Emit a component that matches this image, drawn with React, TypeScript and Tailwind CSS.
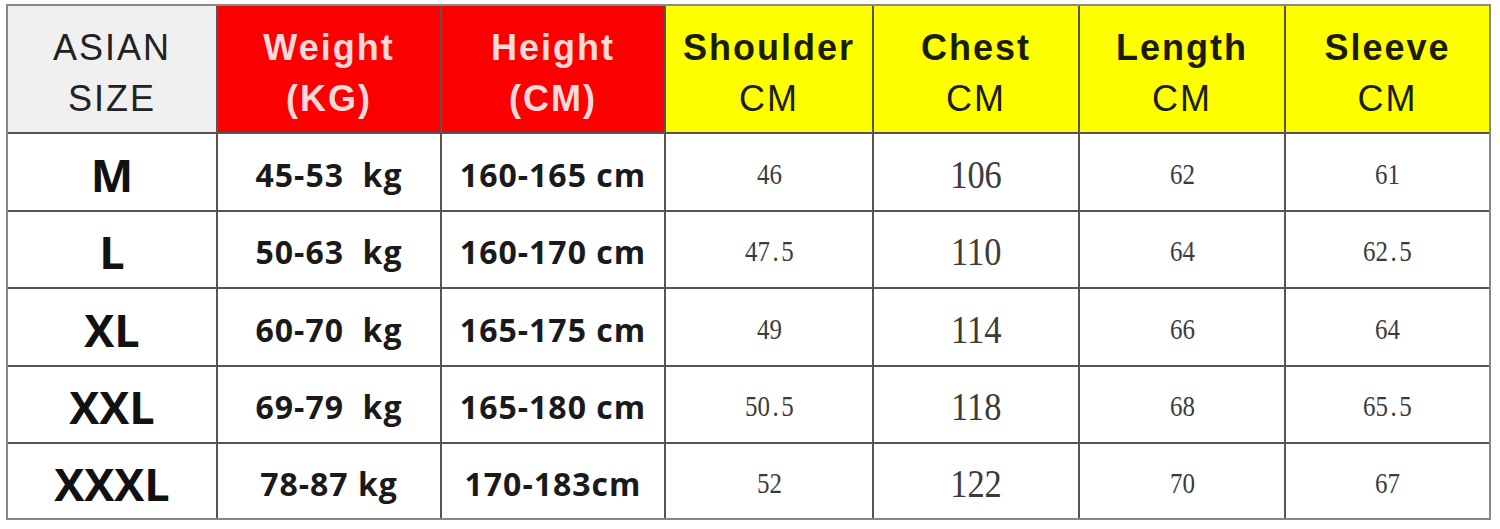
import React from 'react';

interface SizeRow {
  size: string;
  weight: string;
  height: string;
  shoulder: string;
  chest: string;
  length: string;
  sleeve: string;
}

const ROWS: SizeRow[] = [
  { size: 'M', weight: '45-53\u00a0 kg', height: '160-165 cm', shoulder: '46', chest: '106', length: '62', sleeve: '61' },
  { size: 'L', weight: '50-63\u00a0 kg', height: '160-170 cm', shoulder: '47.5', chest: '110', length: '64', sleeve: '62.5' },
  { size: 'XL', weight: '60-70\u00a0 kg', height: '165-175 cm', shoulder: '49', chest: '114', length: '66', sleeve: '64' },
  { size: 'XXL', weight: '69-79\u00a0 kg', height: '165-180 cm', shoulder: '50.5', chest: '118', length: '68', sleeve: '65.5' },
  { size: 'XXXL', weight: '78-87 kg', height: '170-183cm', shoulder: '52', chest: '122', length: '70', sleeve: '67' },
];

const COLS = 'grid grid-cols-[208px_222px_222px_206px_204px_204px_203px]';
const cell = 'flex items-center justify-center bg-white pt-[5px]';
const bold = `${cell} text-[#1a1a1a] text-[32px] font-bold tracking-[1px] [font-family:'Open_Sans',sans-serif] whitespace-pre`;
const head = 'flex flex-col items-center justify-center pt-[7px] text-[36px] tracking-[2px] leading-[51px]';

// decimal point in the source font sits in a wide slot: "47. 5"
function Num({ value, big }: { value: string; big?: boolean }) {
  const [a, b] = value.split('.');
  return (
    <div className={`${cell} text-[#3b3b3b] [font-family:'Liberation_Serif',serif]`}>
      <span className={`inline-block scale-x-[0.86] ${big ? 'text-[40px]' : 'text-[29px]'}`}>
        {a}
        {b !== undefined && (
          <>
            <span className="inline-block mx-[3px]">.</span>
            {b}
          </>
        )}
      </span>
    </div>
  );
}

export default function App() {
  return (
    <div className="w-[1500px] h-[529px] bg-white pl-[6px] pt-[4px]">
      <div className={`${COLS} grid-rows-[126px_76px_75px_76px_75px_74px] gap-[2px] bg-[#555] border-2 border-[#888] w-fit [font-family:'Liberation_Sans',Arial,sans-serif]`}>
        <div className={`${head} bg-[#f0f0f0] text-[#222]`}>
          <span>ASIAN</span>
          <span>SIZE</span>
        </div>
        {[
          ['Weight', '(KG)'],
          ['Height', '(CM)'],
        ].map(([a, b]) => (
          <div key={a} className={`${head} bg-[#fb0000] text-[#ffd9d9] font-bold`}>
            <span>{a}</span>
            <span>{b}</span>
          </div>
        ))}
        {['Shoulder', 'Chest', 'Length', 'Sleeve'].map((h) => (
          <div key={h} className={`${head} bg-[#ffff00] text-[#1c1c00]`}>
            <span className="font-bold">{h}</span>
            <span>CM</span>
          </div>
        ))}
        {ROWS.map((r) => (
          <React.Fragment key={r.size}>
            <div className={`${cell} text-[#111] text-[45px] font-bold [font-family:'Open_Sans',sans-serif]`}>{r.size}</div>
            <div className={bold}>{r.weight}</div>
            <div className={bold}>{r.height}</div>
            <Num value={r.shoulder} />
            <Num value={r.chest} big />
            <Num value={r.length} />
            <Num value={r.sleeve} />
          </React.Fragment>
        ))}
      </div>
    </div>
  );
}
